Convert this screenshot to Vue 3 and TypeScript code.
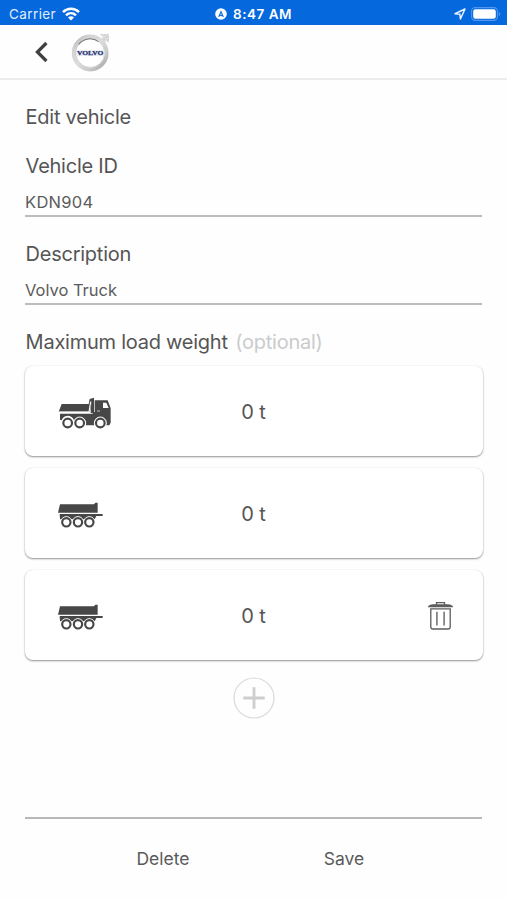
<script setup lang="ts">
import { ref } from 'vue'

interface Unit {
  id: number
  kind: 'truck' | 'trailer'
  load: number
  removable: boolean
}

const vehicleId = ref('KDN904')
const description = ref('Volvo Truck')
const units = ref<Unit[]>([
  { id: 1, kind: 'truck', load: 0, removable: false },
  { id: 2, kind: 'trailer', load: 0, removable: false },
  { id: 3, kind: 'trailer', load: 0, removable: true },
])

function addUnit() {
  units.value.push({ id: Date.now(), kind: 'trailer', load: 0, removable: true })
}

function removeUnit(id: number) {
  units.value = units.value.filter((u) => u.id !== id)
}
</script>

<template>
  <div class="screen">
    <div class="status">
      <div class="status-left">
        <span class="carrier">Carrier</span>
        <svg width="18" height="14" viewBox="0 0 18 14" fill="none" stroke="#fff" stroke-width="2.5">
          <path d="M1 5.2C5.6 .7 12.4 .7 17 5.2" />
          <path d="M4 8.4C6.9 5.6 11.1 5.6 14 8.4" />
          <path d="M9 13.4L6 10.5C7.7 8.8 10.3 8.8 12 10.5Z" fill="#fff" stroke="none" />
        </svg>
      </div>
      <div class="status-time">
        <svg width="12" height="12" viewBox="0 0 12 12">
          <circle cx="6" cy="6" r="5.8" fill="#fff" />
          <path d="M6 2.2L9 9.2L6 7.7L3 9.2Z" fill="#0568dd" />
          <path d="M6 5L7 7L6 6.5L5 7Z" fill="#fff" />
        </svg>
        <span class="clock">8:47 AM</span>
      </div>
      <div class="status-right">
        <svg width="12" height="12" viewBox="0 0 12 12" fill="none" stroke="#e6f1ff" stroke-width="1.5" stroke-linejoin="round">
          <path d="M1 5.8L11 1L6.4 11L5.9 6.2Z" />
        </svg>
        <svg width="30" height="14" viewBox="0 0 30 14">
          <rect x=".6" y=".6" width="25.8" height="12.8" rx="3.6" fill="none" stroke="#4f98ee" stroke-width="1.1" />
          <rect x="2.2" y="2.2" width="22.6" height="9.6" rx="2.2" fill="#fff" />
          <path d="M27.8 4.8Q29.3 5.5 29.3 7T27.8 9.2Z" fill="#4f98ee" />
        </svg>
      </div>
    </div>

    <header class="nav">
      <button class="icon-btn back" aria-label="Back">
        <svg width="14" height="22" viewBox="0 0 14 22" fill="none" stroke="#404040" stroke-width="3.2">
          <path d="M12.4 2L3.4 11L12.4 20" />
        </svg>
      </button>
      <svg class="logo" width="40" height="40" viewBox="0 0 40 40">
        <defs>
          <linearGradient id="chrome" x1="0" y1="0" x2="1" y2="1">
            <stop offset="0" stop-color="#b5b5b5" />
            <stop offset=".22" stop-color="#d4d4d4" />
            <stop offset=".5" stop-color="#dcdcdc" />
            <stop offset=".75" stop-color="#c8c8c8" />
            <stop offset="1" stop-color="#a0a0a0" />
          </linearGradient>
        </defs>
        <path d="M29.5 2.5H37.5V10.5L35.4 9L32 13L28 9L31.7 5Z" fill="#dedede" />
        <path d="M29.5 2.7H37.3V10.4M36 4.5L31 9.5" fill="none" stroke="#b8b8b8" stroke-width=".8" stroke-dasharray="2 1" />
        <circle cx="19.2" cy="21" r="16.4" fill="none" stroke="url(#chrome)" stroke-width="4" />
        <circle cx="19.2" cy="21" r="14.4" fill="#fff" stroke="#aaa" stroke-width=".5" />
        <path d="M7.6 12.5A14.3 14.3 0 0 1 27.5 9.6" fill="none" stroke="#777" stroke-width="1.1" />
        <rect x="5" y="18" width="28.4" height="6" fill="#e9ebf1" />
        <text x="19.2" y="23.2" text-anchor="middle" textLength="26.5" lengthAdjust="spacingAndGlyphs" class="logo-text">VOLVO</text>
      </svg>
    </header>

    <main class="content">
      <h1 class="title heading">Edit vehicle</h1>

      <label class="field">
        <span class="heading id-label">Vehicle ID</span>
        <input v-model="vehicleId" class="input id-input" type="text" />
      </label>

      <label class="field">
        <span class="heading desc-label">Description</span>
        <input v-model="description" class="input desc-input" type="text" />
      </label>

      <h2 class="heading weight"><span class="weight-label">Maximum load weight</span><span class="optional">(optional)</span></h2>

      <div class="cards">
        <section v-for="unit in units" :key="unit.id" class="card">
          <svg v-if="unit.kind === 'truck'" class="vehicle" width="75" height="55" viewBox="0 0 225 165">
            <path d="M35 57H116L119 42L132 38V48L125 50L120 80H26Z" fill="#474747" />
            <path d="M124 50L132 46V84H122Z" fill="#474747" />
            <path d="M122 50L117 81.5H27" fill="none" stroke="#fff" stroke-width="3.5" />
            <path
              d="M30 86H127L134 80V46H173L182 70V113L178 121H168A17 17 0 0 0 134 121H108A18 18 0 0 0 72 117A18 18 0 0 0 35 106L30 104Z"
              fill="#474747"
            />
            <path d="M159 53H169L176 69H159Z" fill="#fff" />
            <path d="M141 78H150" stroke="#fff" stroke-width="2" />
            <g fill="#fff" stroke="#fff" stroke-width="3">
              <circle cx="53" cy="114" r="18" />
              <circle cx="89" cy="114" r="18" />
              <circle cx="151" cy="114" r="18" />
            </g>
            <g fill="#fff" stroke="#474747" stroke-width="6.5">
              <circle cx="53" cy="114" r="13" />
              <circle cx="89" cy="114" r="13" />
              <circle cx="151" cy="114" r="13" />
            </g>
          </svg>
          <svg v-else class="vehicle" width="75" height="55" viewBox="0 -8 225 165">
            <path d="M24 69L30 44H132L136 39H143V69Z" fill="#474747" />
            <path d="M29 73H158V79H139L134 89H30Z" fill="#474747" />
            <g fill="#fff" stroke="#fff" stroke-width="3">
              <circle cx="49" cy="98" r="17" />
              <circle cx="84" cy="98" r="17" />
              <circle cx="118" cy="98" r="17" />
            </g>
            <g fill="#fff" stroke="#474747" stroke-width="6.5">
              <circle cx="49" cy="98" r="12.5" />
              <circle cx="84" cy="98" r="12.5" />
              <circle cx="118" cy="98" r="12.5" />
            </g>
          </svg>
          <span class="load">{{ unit.load }} t</span>
          <button v-if="unit.removable" class="icon-btn remove" aria-label="Remove" @click="removeUnit(unit.id)">
            <svg width="25" height="29" viewBox="0 0 25 29" fill="none" stroke="#5c5c5c" stroke-width="1.3">
              <path d="M8.5 4V1.7H16.5V4" />
              <path d="M.9 5.5Q2 4 5 4H20Q23 4 24.1 5.5Z" fill="#777" />
              <path d="M2.8 7.8H22.2V25.8Q22.2 28 20 28H5Q2.8 28 2.8 25.8Z" />
              <path d="M8.9 10.8V24.6M16.1 10.8V24.6" stroke="#777" stroke-width="1.6" />
            </svg>
          </button>
        </section>
      </div>

      <button class="icon-btn add" aria-label="Add" @click="addUnit">
        <svg width="42" height="42" viewBox="0 0 42 42" fill="none">
          <circle cx="21" cy="21" r="20" stroke="#d9d9d9" stroke-width="1.2" />
          <path d="M21 10.3V31.7M10.3 21H31.7" stroke="#cecece" stroke-width="2.8" />
        </svg>
      </button>
    </main>

    <footer class="footer">
      <button class="action delete">Delete</button>
      <button class="action save">Save</button>
    </footer>
  </div>
</template>

<style>
body {
  margin: 0;
  background: #fff;
}
</style>

<style scoped>
.screen {
  box-sizing: border-box;
  width: 507px;
  height: 900px;
  display: flex;
  flex-direction: column;
  overflow: hidden;
  background: #fefefe;
  color: #555;
  font-family: Inter, 'Liberation Sans', sans-serif;
}
.status {
  height: 25px;
  flex: none;
  display: grid;
  grid-template-columns: 1fr auto 1fr;
  align-items: center;
  box-sizing: border-box;
  padding: 2px 6px 0 9px;
  background: #0568dd;
  color: #fff;
  font-size: 13.5px;
}
.status-left,
.status-time,
.status-right {
  display: flex;
  align-items: center;
}
.status-left {
  gap: 6px;
  color: #e0eeff;
}
.carrier {
  letter-spacing: 0.4px;
}
.status-time {
  gap: 6px;
  margin-right: 3px;
}
.clock {
  font-weight: 600;
  letter-spacing: 0.5px;
  font-size: 13.5px;
}
.status-right {
  justify-content: flex-end;
  gap: 5px;
}
.nav {
  box-sizing: border-box;
  height: 55px;
  flex: none;
  display: flex;
  align-items: center;
  gap: 23px;
  padding: 0 0 0 34px;
  border-bottom: 2px solid #ececec;
}
.icon-btn {
  display: flex;
  padding: 0;
  border: 0;
  background: none;
  cursor: pointer;
}
.logo-text {
  font-family: 'Liberation Serif', serif;
  font-size: 7px;
  font-weight: 700;
  fill: #252f71;
  stroke: #252f71;
  stroke-width: 0.25px;
}
.content {
  flex: 1;
  padding: 0 24px 0 25px;
  display: flex;
  flex-direction: column;
}
.heading {
  display: block;
  margin: 0;
  font-size: 20px;
  line-height: 24px;
  font-weight: 400;
  letter-spacing: -0.25px;
  white-space: nowrap;
  text-indent: 0.6px;
}
.title {
  padding-top: 25px;
}
.field {
  display: flex;
  flex-direction: column;
  margin-right: 1px;
}
.id-label {
  margin-top: 25px;
}
.desc-label {
  margin-top: 25px;
}
.input {
  box-sizing: border-box;
  width: 100%;
  height: 39px;
  padding: 10px 0 0;
  border: 0;
  border-bottom: 2px solid #bcbcbc;
  border-radius: 0;
  outline: none;
  background: none;
  color: #5c5c5c;
  font: 400 16.5px/24px Inter, 'Liberation Sans', sans-serif;
}
.id-input {
  letter-spacing: 0.3px;
}
.desc-input {
  letter-spacing: -0.02px;
}
.weight {
  display: flex;
  gap: 7px;
  margin-top: 25px;
}
.optional {
  color: #cbcbcb;
}
.cards {
  display: flex;
  flex-direction: column;
  gap: 12px;
  margin-top: 12px;
}
.card {
  box-sizing: border-box;
  height: 90px;
  display: grid;
  grid-template-columns: 75px 1fr 75px;
  align-items: center;
  padding: 0 30px 0 25px;
  border-radius: 8px;
  background: #fff;
  box-shadow: 0 1px 2px rgba(0, 0, 0, 0.42), 0 0 1px rgba(0, 0, 0, 0.12);
}
.vehicle {
  margin-top: 3px;
}
.load {
  justify-self: center;
  padding: 1px 0 0 4px;
  font-size: 20px;
  line-height: 24px;
  letter-spacing: -0.1px;
}
.remove {
  justify-self: end;
}
.add {
  align-self: center;
  margin-top: 17px;
}
.footer {
  box-sizing: border-box;
  height: 83px;
  flex: none;
  margin: 0 25px;
  display: flex;
  border-top: 2px solid #b8b8b8;
  padding-top: 28px;
}
.action {
  height: 24px;
  padding: 0;
  border: 0;
  background: none;
  color: #5a5a5a;
  font: 400 17.5px/24px Inter, 'Liberation Sans', sans-serif;
  cursor: pointer;
}
.delete {
  margin-left: 111px;
  width: 54px;
}
.save {
  margin-left: 133px;
  width: 42px;
}
</style>
